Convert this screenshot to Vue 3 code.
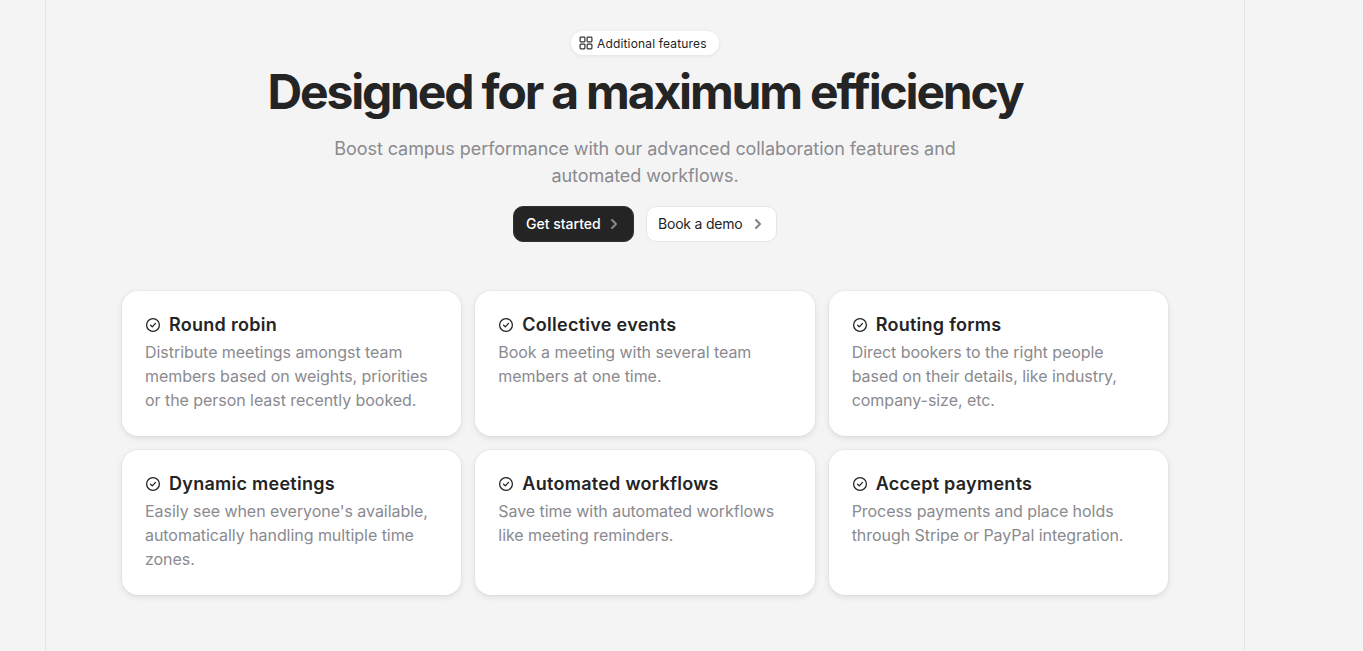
<script setup>
const cards = [
  { title: 'Round robin', text: 'Distribute meetings amongst team members based on weights, priorities or the person least recently booked.' },
  { title: 'Collective events', text: 'Book a meeting with several team members at one time.' },
  { title: 'Routing forms', text: 'Direct bookers to the right people based on their details, like industry, company-size, etc.' },
  { title: 'Dynamic meetings', text: "Easily see when everyone's available, automatically handling multiple time zones." },
  { title: 'Automated workflows', text: 'Save time with automated workflows like meeting reminders.' },
  { title: 'Accept payments', text: 'Process payments and place holds through Stripe or PayPal integration.' },
];
</script>

<template>
  <div class="page">
    <section class="features">
      <div class="badge">
        <svg width="14" height="14" viewBox="0 0 14 14" fill="none" stroke="#333" stroke-width="1.2">
          <rect x="1.1" y="1.1" width="4.8" height="4.8" rx="0.8" />
          <rect x="8.1" y="1.1" width="4.8" height="4.8" rx="0.8" />
          <rect x="1.1" y="8.1" width="4.8" height="4.8" rx="0.8" />
          <rect x="8.1" y="8.1" width="4.8" height="4.8" rx="0.8" />
        </svg>
        <span>Additional features</span>
      </div>
      <h1 class="title">Designed for a maximum efficiency</h1>
      <p class="subtitle">Boost campus performance with our advanced collaboration features and automated workflows.</p>
      <div class="actions">
        <a class="btn btn--dark">
          <span>Get started</span>
          <svg width="10" height="12" viewBox="0 0 10 12" fill="none" stroke="#8a8a8a" stroke-width="2" stroke-linecap="round" stroke-linejoin="round"><path d="M3 2l4 4-4 4" /></svg>
        </a>
        <a class="btn btn--light">
          <span>Book a demo</span>
          <svg width="10" height="12" viewBox="0 0 10 12" fill="none" stroke="#808080" stroke-width="2" stroke-linecap="round" stroke-linejoin="round"><path d="M3 2l4 4-4 4" /></svg>
        </a>
      </div>
      <div class="grid">
        <article v-for="card in cards" :key="card.title" class="card">
          <h3 class="card__title">
            <svg width="16" height="16" viewBox="0 0 16 16" fill="none" stroke="#242424" stroke-width="1.3" stroke-linecap="round" stroke-linejoin="round">
              <circle cx="8" cy="8" r="6.4" />
              <path d="M5.6 8.2l1.7 1.7 3.2-3.5" />
            </svg>
            {{ card.title }}
          </h3>
          <p class="card__text">{{ card.text }}</p>
        </article>
      </div>
    </section>
  </div>
</template>

<style>
html, body {
  background: #f4f4f4;
  overflow: hidden;
}
</style>

<style scoped>
.page {
  padding-left: 45px;
  font-family: "Inter", "Liberation Sans", sans-serif;
}

.features {
  box-sizing: border-box;
  width: 1200px;
  height: 651px;
  padding-top: 31px;
  border-left: 1px solid #e5e5e5;
  border-right: 1px solid #e5e5e5;
  display: flex;
  flex-direction: column;
  align-items: center;
}

.badge {
  display: flex;
  align-items: center;
  gap: 4px;
  box-sizing: border-box;
  width: 148px;
  height: 24px;
  padding-left: 8px;
  background: #fff;
  border-radius: 12px;
  box-shadow: 0 1px 4px rgba(0, 0, 0, 0.08);
  font-size: 12px;
  letter-spacing: 0.16px;
  white-space: nowrap;
  color: #242424;
}

.title {
  margin: 9px 0 0;
  font-size: 48px;
  line-height: 56px;
  font-weight: 700;
  letter-spacing: -2.18px;
  white-space: nowrap;
  color: #242424;
}

.subtitle {
  margin: 15px 0 0;
  width: 640px;
  font-size: 18px;
  line-height: 27px;
  letter-spacing: -0.07px;
  text-align: center;
  color: #8a8a8f;
}

.actions {
  display: flex;
  gap: 12px;
  margin-top: 17px;
}

.btn {
  display: flex;
  align-items: center;
  justify-content: space-between;
  box-sizing: border-box;
  height: 36px;
  border-radius: 10px;
  font-size: 14px;
  line-height: 16px;
  white-space: nowrap;
}

.btn span {
  margin-top: -1px;
}

.btn--dark {
  width: 121px;
  padding: 0 14px 0 13px;
  background: #242424;
  border: 1px solid #333;
  padding-left: 12px;
  color: #fff;
  font-weight: 500;
}

.btn--light {
  width: 131px;
  padding: 0 13px 0 11px;
  background: #fff;
  border: 1px solid #e5e5e5;
  color: #242424;
  letter-spacing: -0.2px;
}

.grid {
  display: grid;
  grid-template-columns: repeat(3, 1fr);
  grid-auto-rows: 145px;
  gap: 14px;
  width: 1046px;
  margin-top: 49px;
}

.card {
  box-sizing: border-box;
  padding: 22px 23px;
  background: #fff;
  border-radius: 16px;
  box-shadow: 0 0 0 1px rgba(0, 0, 0, 0.02), 0 2px 6px rgba(0, 0, 0, 0.1);
}

.card__title {
  display: flex;
  align-items: center;
  gap: 8px;
  margin: 0 0 3px;
  font-size: 18px;
  line-height: 24px;
  font-weight: 600;
  letter-spacing: 0.27px;
  color: #242424;
}

.card__text {
  margin: 0;
  font-size: 16px;
  line-height: 24px;
  letter-spacing: -0.05px;
  color: #8a8a8f;
}
</style>
